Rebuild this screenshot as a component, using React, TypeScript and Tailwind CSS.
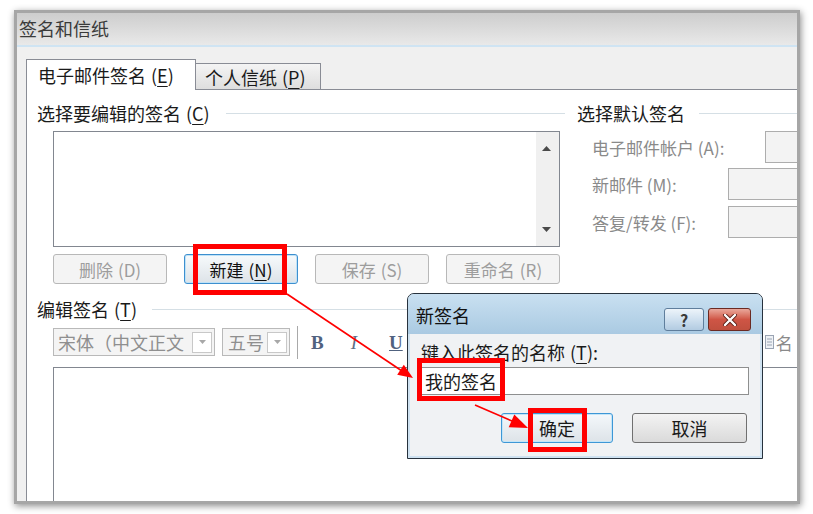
import React from "react";

const Acc: React.FC<{ k: string }> = ({ k }) => (
  <span className="ml-[5px]">
    (<span className="underline underline-offset-[3px]">{k}</span>)
  </span>
);

const Arrow: React.FC<{ up?: boolean }> = ({ up }) => (
  <svg width="9" height="5" viewBox="0 0 9 5">
    {up ? <polygon points="0,5 9,5 4.5,0" fill="#4a4a4a" /> : <polygon points="0,0 9,0 4.5,5" fill="#4a4a4a" />}
  </svg>
);

const Drop: React.FC = () => (
  <div className="w-[20px] h-[21px] shrink-0 bg-white border border-[#c8c8c8] flex items-center justify-center">
    <svg width="7" height="4" viewBox="0 0 7 4">
      <polygon points="0,0 7,0 3.5,4" fill="#a8a8a8" />
    </svg>
  </div>
);

const Button: React.FC<{ label: string; k: string; active?: boolean }> = ({ label, k, active }) => (
  <div
    className={`w-[114px] h-[30px] rounded-[3px] border flex items-center justify-center text-[17px] ${
      active
        ? "border-[#3d8fcf] bg-gradient-to-b from-[#f7fafc] to-[#dde3e8] shadow-[inset_0_0_0_1px_#bfe2f7] text-[#111]"
        : "border-[#b8b8b8] bg-[#f4f4f4] text-[#9d9d9d]"
    }`}
  >
    {label}
    {active ? <Acc k={k} /> : <span className="ml-[5px]">({k})</span>}
  </div>
);

export default function App() {
  return (
    <div className="relative w-[813px] h-[514px] bg-white overflow-hidden pl-[14px] pt-[10px] font-['Noto_Sans_CJK_SC',sans-serif] text-[#1a1a1a] leading-none">
      {/* main window */}
      <div className="w-[786px] h-[494px] border-[3px] border-[#a6a6a6] shadow-[1px_2px_7px_rgba(0,0,0,0.45)] flex flex-col overflow-hidden bg-[#f0f0f0]">
        <div className="h-[32px] shrink-0 bg-gradient-to-b from-[#cdcdcd] to-[#e9e9e9] flex items-center pl-[2px] pb-[2px] text-[18px] text-[#3a3a3a]">
          签名和信纸
        </div>
        <div className="h-[2px] shrink-0 bg-[#cfe4f3]" />

        <div className="flex-1 min-h-0 pl-[9px] pt-[12px] flex flex-col">
          {/* tabs */}
          <div className="flex items-end h-[31px] shrink-0">
            <div className="h-[31px] w-[170px] shrink-0 bg-white border border-b-0 border-[#898c95] pl-[11px] flex items-center text-[18px]">
              电子邮件签名
              <Acc k="E" />
            </div>
            <div className="h-[27px] w-[125px] shrink-0 border-t border-r border-b border-[#898c95] bg-gradient-to-b from-[#f4f4f4] to-[#dedede] pl-[9px] flex items-center text-[18px]">
              个人信纸
              <Acc k="P" />
            </div>
            <div className="flex-1 h-full border-b border-[#898c95]" />
          </div>

          {/* panel */}
          <div className="flex-1 min-h-0 w-[800px] bg-white border-l border-[#898c95] pl-[10px] pt-[11px]">
            <div className="flex">
              <div className="w-[528px] shrink-0 flex flex-col">
                <div className="h-[24px] flex items-center text-[18px]">
                  <span>
                    选择要编辑的签名
                    <Acc k="C" />
                  </span>
                  <div className="flex-1 h-px bg-[#d5dfe5] ml-[16px]" />
                </div>
                <div className="ml-[16px] mt-[6px] w-[507px] h-[116px] border border-[#828790] bg-white flex justify-end">
                  <div className="w-[23px] h-full bg-[#f0f0f0] flex flex-col items-center justify-between py-[14px] pr-[2px]">
                    <Arrow up />
                    <Arrow />
                  </div>
                </div>
                <div className="ml-[16px] mt-[7px] w-[507px] h-[30px] flex justify-between">
                  <Button label="删除" k="D" />
                  <Button label="新建" k="N" active />
                  <Button label="保存" k="S" />
                  <Button label="重命名" k="R" />
                </div>
              </div>

              <div className="pl-[12px] w-[240px] shrink-0 flex flex-col">
                <div className="h-[24px] flex items-center text-[18px]">
                  <span>选择默认签名</span>
                  <div className="flex-1 h-px bg-[#d5dfe5] ml-[14px]" />
                </div>
                <div className="mt-[6px] flex flex-col gap-[5px] pl-[15px] text-[17px] text-[#8a8a8a]">
                  <div className="flex items-center h-[32px]">
                    <span className="w-[173px] shrink-0">电子邮件帐户 (A):</span>
                    <div className="w-[60px] h-full shrink-0 bg-[#f3f3f3] border border-[#adadad]" />
                  </div>
                  <div className="flex items-center h-[32px]">
                    <span className="w-[136px] shrink-0">新邮件 (M):</span>
                    <div className="w-[90px] h-full shrink-0 bg-[#f3f3f3] border border-[#adadad]" />
                  </div>
                  <div className="flex items-center h-[32px] mt-px">
                    <span className="w-[136px] shrink-0">答复/转发 (F):</span>
                    <div className="w-[90px] h-full shrink-0 bg-[#f3f3f3] border border-[#adadad]" />
                  </div>
                </div>
              </div>
            </div>

            {/* edit signature */}
            <div className="mt-[13px] h-[24px] flex items-center text-[18px]">
              <span>
                编辑签名
                <Acc k="T" />
              </span>
              <div className="flex-1 h-px bg-[#d5dfe5] ml-[15px]" />
            </div>

            <div className="mt-[7px] ml-[16px] h-[28px] flex items-center">
              <div className="w-[162px] h-full shrink-0 bg-[#f4f4f4] border border-[#b9b9b9] flex items-center pl-[4px] pr-[2px]">
                <span className="flex-1 whitespace-nowrap text-[18px] text-[#8f8f8f]">宋体（中文正文</span>
                <Drop />
              </div>
              <div className="w-[68px] h-full shrink-0 ml-[7px] bg-[#f4f4f4] border border-[#b9b9b9] flex items-center pl-[5px] pr-[2px]">
                <span className="flex-1 text-[18px] text-[#8f8f8f]">五号</span>
                <Drop />
              </div>
              <div className="ml-[7px] h-[33px] w-[2px] border-l border-[#a9a9a9] border-r border-r-white" />
              <span className="ml-[12px] font-['Liberation_Serif',serif] font-bold text-[19px] text-[#50627f]">B</span>
              <span className="ml-[27px] font-['Liberation_Serif',serif] italic text-[19px] text-[#5f6f88]">I</span>
              <span className="ml-[32px] font-['Liberation_Serif',serif] font-bold underline text-[19px] text-[#50627f]">U</span>
              <div className="ml-[362px] flex items-center text-[17px] text-[#8a8a8a]">
                <svg width="9" height="14" viewBox="0 0 9 14" className="mr-[2px]">
                  <rect x="0.5" y="0.5" width="8" height="13" fill="#eef1f5" stroke="#9aa4b3" />
                  <line x1="2" y1="4" x2="7" y2="4" stroke="#9aa4b3" />
                  <line x1="2" y1="7" x2="7" y2="7" stroke="#9aa4b3" />
                  <line x1="2" y1="10" x2="7" y2="10" stroke="#9aa4b3" />
                </svg>
                <span>名</span>
              </div>
            </div>

            <div className="mt-[11px] ml-[16px] h-[200px] border-t border-l border-[#828790] bg-white" />
          </div>
        </div>
      </div>

      {/* new signature dialog */}
      <div className="absolute left-[407px] top-[293px] w-[356px] h-[166px] border border-[#27323d] rounded-t-[7px] overflow-hidden flex flex-col bg-[#cfe2f1] z-20">
        <div className="h-[40px] shrink-0 bg-gradient-to-b from-[#c9e0f1] to-[#aacae2] flex justify-between items-start pl-[8px] pr-[11px]">
          <span className="mt-[9px] text-[18px] leading-[24px] text-[#111]">新签名</span>
          <div className="mt-[14px] flex gap-[4px]">
            <div className="w-[40px] h-[23px] rounded-[3px] border border-[#5f7e9c] bg-gradient-to-b from-[#edf4fa] via-[#cfe0ef] to-[#b2cbe1] flex items-center justify-center text-[16px] font-bold text-[#3a3a3a]">
              ?
            </div>
            <div className="w-[43px] h-[23px] rounded-[3px] border border-[#6b2a22] bg-gradient-to-b from-[#e9a89c] via-[#cf5545] to-[#c0503f] flex items-center justify-center">
              <svg width="16" height="12" viewBox="0 0 16 12">
                <path d="M3 1 L13 11 M13 1 L3 11" stroke="#5a1f18" strokeWidth="4" strokeLinecap="round" />
                <path d="M3 1 L13 11 M13 1 L3 11" stroke="#ffffff" strokeWidth="2.4" strokeLinecap="round" />
              </svg>
            </div>
          </div>
        </div>
        <div className="flex-1 mx-[2px] mb-[2px] bg-[#f0f2f4] pl-[11px] pr-[13px] pt-[6px] flex flex-col">
          <div className="h-[24px] flex items-center text-[18px]">
            键入此签名的名称
            <Acc k="T" />:
          </div>
          <div className="mt-[3px] w-[328px] h-[28px] bg-white border border-[#8e8f8f] flex items-center pl-[3px] text-[18px]">
            我的签名
          </div>
          <div className="mt-[18px] flex justify-end gap-[19px]">
            <div className="w-[112px] h-[30px] rounded-[3px] border border-[#3d97d6] bg-gradient-to-b from-[#f4f8fb] to-[#dde3e8] shadow-[inset_0_0_0_1px_#c3e5f8] flex items-center justify-center text-[18px]">
              确定
            </div>
            <div className="w-[115px] h-[30px] rounded-[3px] border border-[#707070] bg-gradient-to-b from-[#f3f3f3] to-[#dadada] flex items-center justify-center text-[18px]">
              取消
            </div>
          </div>
        </div>
      </div>

      {/* annotations */}
      <div className="absolute left-[193px] top-[244px] w-[94px] h-[51px] border-[5px] border-[#ff0000] z-30" />
      <div className="absolute left-[417px] top-[358px] w-[88px] h-[43px] border-[5px] border-[#ff0000] z-30" />
      <div className="absolute left-[528px] top-[408px] w-[59px] h-[44px] border-[5px] border-[#ff0000] z-30" />
      <svg className="absolute left-0 top-0 z-30 pointer-events-none" width="813" height="514" viewBox="0 0 813 514">
        <line x1="287" y1="294" x2="402" y2="371" stroke="#ff0000" strokeWidth="1.6" />
        <polygon points="413,378 403.8,364.7 397.2,374.7" fill="#ff0000" />
        <line x1="475" y1="405" x2="512" y2="421" stroke="#ff0000" strokeWidth="1.6" />
        <polygon points="528,428 508.7,427.2 514.3,414.4" fill="#ff0000" />
      </svg>
    </div>
  );
}
